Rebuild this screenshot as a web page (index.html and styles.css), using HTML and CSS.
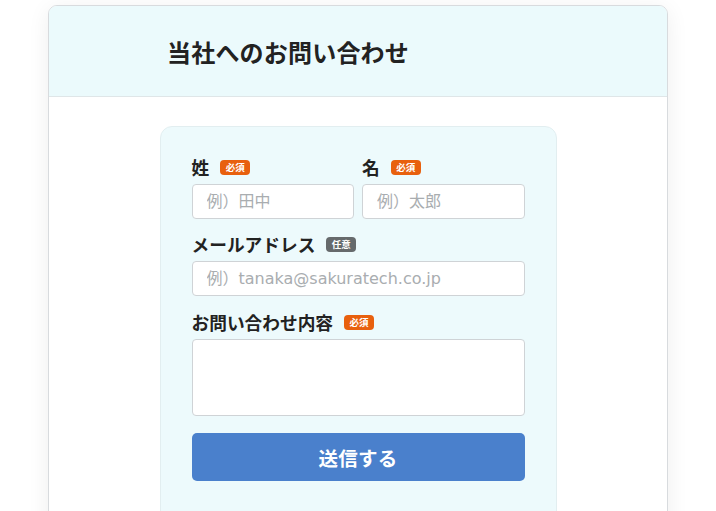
FILE: index.html
```html
<!DOCTYPE html>
<html lang="ja">
<head>
<meta charset="utf-8">
<title>当社へのお問い合わせ</title>
<link rel="stylesheet" href="styles.css">
</head>
<body>
<div class="card">
  <header class="card-header">
    <h1 class="title">当社へのお問い合わせ</h1>
  </header>
  <div class="card-body">
    <form class="panel">
      <div class="row">
        <div class="field">
          <label class="label">姓<span class="badge req">必須</span></label>
          <input class="input" type="text" placeholder="例）田中">
        </div>
        <div class="field">
          <label class="label">名<span class="badge req">必須</span></label>
          <input class="input" type="text" placeholder="例）太郎">
        </div>
      </div>
      <div class="field">
        <label class="label">メールアドレス<span class="badge opt">任意</span></label>
        <input class="input" type="email" placeholder="例）tanaka@sakuratech.co.jp">
      </div>
      <div class="field">
        <label class="label">お問い合わせ内容<span class="badge req">必須</span></label>
        <textarea class="textarea"></textarea>
      </div>
      <button class="submit" type="button">送信する</button>
    </form>
  </div>
</div>
</body>
</html>
```

FILE: styles.css
```css
html, body {
  margin: 0;
  padding: 0;
  background: #ffffff;
  height: 511px;
  overflow: hidden;
}
body {
  font-family: "Noto Sans CJK JP", "Noto Sans", sans-serif;
  color: #222;
  padding-top: 5px;
}
.card {
  width: 618px;
  margin: 0 auto;
  border: 1.5px solid #d8dbde;
  border-radius: 9px;
  background: #fff;
  box-shadow: 0 4px 22px rgba(0, 0, 0, 0.07);
  overflow: hidden;
  height: 560px;
}
.card-header {
  height: 90px;
  background: #ebfafc;
  border-bottom: 1px solid #dfe6e8;
  display: flex;
  align-items: center;
  padding-left: 118px;
}
.title {
  margin: 0;
  font-size: 24px;
  font-weight: 600;
  color: #222;
  letter-spacing: 0.2px;
}
.card-body {
  padding-top: 29px;
  display: flex;
  justify-content: center;
}
.panel {
  width: 333px;
  padding: 28px 31px 40px 31px;
  background: #edfafc;
  border: 1px solid #e2eef0;
  border-radius: 12px;
  display: flex;
  flex-direction: column;
  height: 500px;
}
.row {
  display: flex;
  gap: 8px;
  margin-bottom: 13px;
}
.row .field {
  flex: 1;
  min-width: 0;
  margin-bottom: 0;
}
.field {
  display: flex;
  flex-direction: column;
  margin-bottom: 14px;
}
.label {
  display: flex;
  align-items: center;
  height: 24px;
  font-size: 17.7px;
  font-weight: 700;
  color: #222;
  margin-bottom: 5px;
}
.badge {
  display: inline-block;
  margin-left: 11px;
  font-size: 9.5px;
  line-height: 15px;
  height: 15px;
  padding: 0 5.5px;
  border-radius: 4px;
  color: #fff;
  font-weight: 700;
}
.badge.req { background: #e8600e; }
.badge.opt { background: #666a6c; }
.input, .textarea {
  box-sizing: border-box;
  width: 100%;
  border: 1.5px solid #cfd3d6;
  border-radius: 4px;
  background: #fff;
  font-family: "DejaVu Sans", "Noto Sans CJK JP", sans-serif;
  font-size: 16px;
  color: #333;
  outline: none;
  margin: 0;
}
.input {
  height: 35px;
  padding: 0 14px;
}
.input::placeholder {
  color: #a9adb0;
}
.textarea {
  height: 77px;
  resize: none;
  padding: 8px 14px;
  display: block;
}
.submit {
  margin-top: 3px;
  height: 48px;
  border: none;
  border-radius: 5px;
  background: #4a80cc;
  color: #fff;
  font-family: "Noto Sans CJK JP", "Noto Sans", sans-serif;
  font-size: 19.5px;
  font-weight: 700;
  letter-spacing: 0.3px;
  cursor: pointer;
}
```
